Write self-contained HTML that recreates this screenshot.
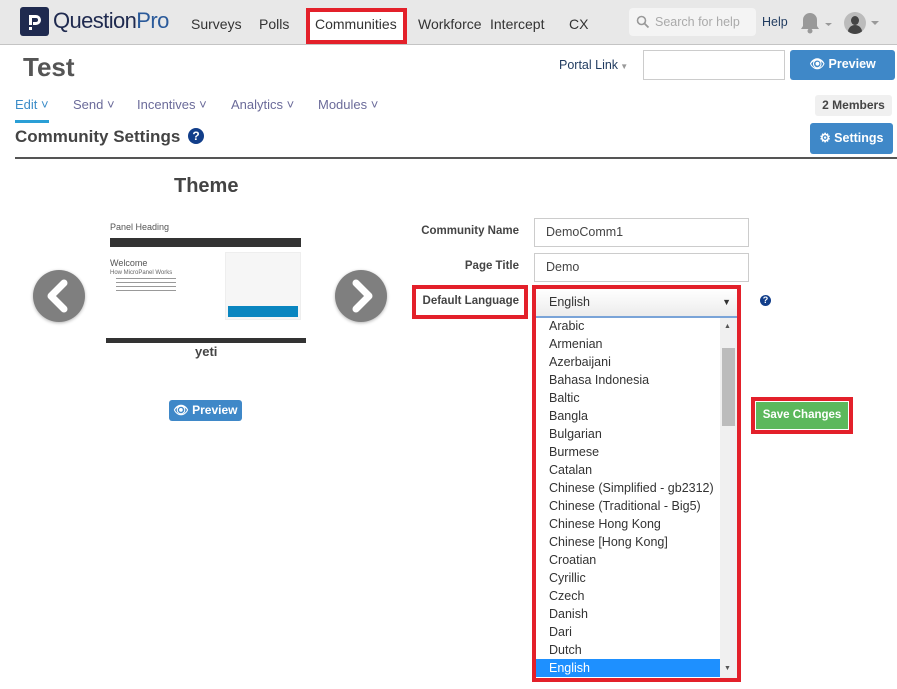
<!DOCTYPE html>
<html><head><meta charset="utf-8"><style>
*{box-sizing:border-box;margin:0;padding:0}
body{width:897px;height:689px;overflow:hidden;background:#fff;font-family:"Liberation Sans",sans-serif;position:relative;color:#333}
.a{position:absolute;white-space:nowrap}
.hdr{left:0;top:0;width:897px;height:45px;background:#e8e8e8;border-bottom:1px solid #c4c4c4}
.nav{font-size:14px;color:#333;top:16px}
.tab{font-size:13px;color:#6b6b9a;top:97px}
.btn{background:#3f88c8;color:#fff;border-radius:3px;font-weight:bold;font-size:12.5px;text-align:center}
.lbl{font-size:11.5px;font-weight:bold;color:#444;text-align:right;width:120px;left:399px}
.inp{border:1px solid #ccc;background:#fff;font-size:12.5px;color:#444;padding-left:11px;line-height:27px}
.opt{height:18px;line-height:18px;font-size:12.5px;color:#333;padding-left:13px}
.circ{width:52px;height:52px;border-radius:50%;background:#7f7f7f;box-shadow:0 1px 3px rgba(0,0,0,.3)}
</style></head><body>
<div class="a hdr"></div>
<div class="a" style="left:20px;top:7px;width:29px;height:29px;background:#1f2a4f;border-radius:3px"></div>
<svg class="a" style="left:20px;top:7px" width="29" height="29"><path d="M9 8h7a5 5 0 0 1 0 10h-3v-3h3a2 2 0 0 0 0-4h-4v7H9z" fill="#fff"/><rect x="9" y="20" width="3" height="3" fill="#fff"/></svg>
<div class="a" style="left:53px;top:8px;font-size:22px;color:#1f2a4f;letter-spacing:-0.6px">Question<span style="color:#2a5a9a">Pro</span></div>
<div class="a nav" style="left:191px">Surveys</div>
<div class="a nav" style="left:259px">Polls</div>
<div class="a" style="left:306px;top:8px;width:101px;height:36px;border:4px solid #e3202a;background:#fff"></div>
<div class="a nav" style="left:315px">Communities</div>
<div class="a nav" style="left:418px">Workforce</div>
<div class="a nav" style="left:490px">Intercept</div>
<div class="a nav" style="left:569px">CX</div>
<div class="a" style="left:629px;top:8px;width:127px;height:28px;background:#f4f4f4;border-radius:4px"></div>
<svg class="a" style="left:636px;top:15px" width="14" height="14"><circle cx="5.5" cy="5.5" r="4" stroke="#999" stroke-width="1.6" fill="none"/><path d="M8.5 8.5l4 4" stroke="#999" stroke-width="1.8"/></svg>
<div class="a" style="left:655px;top:15px;font-size:12.5px;color:#aaa">Search for help</div>
<div class="a" style="left:762px;top:15px;font-size:12.5px;color:#1f3a5f">Help</div>
<svg class="a" style="left:797px;top:10px" width="40" height="25"><path d="M4 19h18l-2-3v-6a7 7 0 0 0-14 0v6z" fill="#999"/><circle cx="13" cy="21" r="2.5" fill="#999"/><path d="M28 13h7l-3.5 3z" fill="#999"/></svg>
<div class="a" style="left:844px;top:12px;width:22px;height:22px;border-radius:50%;background:#bbb;overflow:hidden"><div style="position:absolute;left:7px;top:4px;width:8px;height:9px;border-radius:50%;background:#444"></div><div style="position:absolute;left:4px;top:13px;width:14px;height:12px;border-radius:7px 7px 0 0;background:#444"></div></div>
<svg class="a" style="left:870px;top:20px" width="10" height="6"><path d="M1 1h8l-4 4z" fill="#999"/></svg>

<div class="a" style="left:23px;top:52px;font-size:26px;font-weight:bold;color:#555">Test</div>
<div class="a" style="left:559px;top:58px;font-size:12.5px;color:#1f3a5f">Portal Link<span style="color:#999;font-size:8px"> ▼</span></div>
<div class="a" style="left:643px;top:50px;width:142px;height:30px;border:1px solid #ccc"></div>
<div class="a btn" style="left:790px;top:50px;width:105px;height:30px;line-height:28px">👁 Preview</div>

<div class="a tab" style="left:15px;color:#3c8dc8">Edit ˅</div>
<div class="a tab" style="left:73px">Send ˅</div>
<div class="a tab" style="left:137px">Incentives ˅</div>
<div class="a tab" style="left:231px">Analytics ˅</div>
<div class="a tab" style="left:318px">Modules ˅</div>
<div class="a" style="left:15px;top:120px;width:34px;height:3px;background:#2a9fd6"></div>
<div class="a" style="left:815px;top:95px;width:77px;height:21px;background:#f0f0f0;border-radius:3px;font-size:12px;font-weight:bold;color:#444;text-align:center;line-height:20px">2 Members</div>
<div class="a" style="left:15px;top:127px;font-size:17px;font-weight:bold;color:#444">Community Settings</div>
<div class="a" style="left:188px;top:128px;width:16px;height:16px;border-radius:50%;background:#123e8a;color:#fff;font-size:12px;font-weight:bold;text-align:center;line-height:16px">?</div>
<div class="a btn" style="left:810px;top:123px;width:83px;height:31px;line-height:30px">⚙ Settings</div>
<div class="a" style="left:15px;top:157px;width:882px;height:2px;background:#555"></div>

<div class="a" style="left:174px;top:175px;font-size:20px;font-weight:bold;color:#444">Theme</div>
<div class="a circ" style="left:33px;top:270px"></div>
<svg class="a" style="left:33px;top:270px" width="52" height="52"><path d="M31 13L18 26l13 13" stroke="#fff" stroke-width="7" fill="none" stroke-linecap="round" stroke-linejoin="round"/></svg>
<div class="a circ" style="left:335px;top:270px"></div>
<svg class="a" style="left:335px;top:270px" width="52" height="52"><path d="M21 13l13 13-13 13" stroke="#fff" stroke-width="7" fill="none" stroke-linecap="round" stroke-linejoin="round"/></svg>
<div class="a" style="left:106px;top:220px;width:200px;height:124px;background:#fff">
<div class="a" style="left:4px;top:2px;font-size:9px;color:#555">Panel Heading</div>
<div class="a" style="left:4px;top:18px;width:191px;height:9px;background:#333"></div>
<div class="a" style="left:4px;top:38px;font-size:9px;color:#555">Welcome</div>
<div class="a" style="left:4px;top:50px;font-size:6px;color:#666">How MicroPanel Works</div>
<div class="a" style="left:10px;top:58px;width:60px;height:14px;background:repeating-linear-gradient(#999 0 1px,#fff 1px 4px)"></div>
<div class="a" style="left:119px;top:32px;width:76px;height:68px;background:#f6f6f6;border:1px solid #eee"></div>
<div class="a" style="left:122px;top:86px;width:70px;height:11px;background:#0a86c0"></div>
<div class="a" style="left:0;top:118px;width:200px;height:5px;background:#333"></div>
</div>
<div class="a" style="left:195px;top:344px;font-size:13px;font-weight:bold;color:#444">yeti</div>
<div class="a btn" style="left:169px;top:400px;width:73px;height:21px;line-height:20px;font-size:12px">👁 Preview</div>

<div class="a lbl" style="top:225px">Community Name</div>
<div class="a lbl" style="top:260px">Page Title</div>
<div class="a" style="left:412px;top:285px;width:116px;height:34px;border:4px solid #e3202a"></div>
<div class="a lbl" style="top:295px">Default Language</div>
<div class="a inp" style="left:534px;top:218px;width:215px;height:29px">DemoComm1</div>
<div class="a inp" style="left:534px;top:253px;width:215px;height:29px">Demo</div>
<div class="a" style="left:532px;top:285px;width:209px;height:397px;border:4px solid #e3202a"></div>
<div class="a" style="left:536px;top:289px;width:201px;height:29px;background:linear-gradient(#fff,#ececec);border-bottom:2px solid #7aa4d8;font-size:12.5px;color:#333;padding-left:13px;line-height:26px">English<span style="position:absolute;right:6px;font-size:9px">▼</span></div>
<div class="a" style="left:536px;top:318px;width:201px;height:360px;overflow:hidden;background:#fff">
<div style="position:absolute;left:0;top:-1px;width:184px">
<div class="opt">Arabic</div><div class="opt">Armenian</div><div class="opt">Azerbaijani</div><div class="opt">Bahasa Indonesia</div><div class="opt">Baltic</div><div class="opt">Bangla</div><div class="opt">Bulgarian</div><div class="opt">Burmese</div><div class="opt">Catalan</div><div class="opt">Chinese (Simplified - gb2312)</div><div class="opt">Chinese (Traditional - Big5)</div><div class="opt">Chinese Hong Kong</div><div class="opt">Chinese [Hong Kong]</div><div class="opt">Croatian</div><div class="opt">Cyrillic</div><div class="opt">Czech</div><div class="opt">Danish</div><div class="opt">Dari</div><div class="opt">Dutch</div><div class="opt" style="background:#1e90ff;color:#fff">English</div>
</div>
<div style="position:absolute;left:184px;top:0;width:17px;height:360px;background:#f0f0f0"></div>
<div style="position:absolute;left:186px;top:30px;width:13px;height:78px;background:#bcbcbc"></div>
<div style="position:absolute;left:188px;top:5px;font-size:7px;color:#555">▲</div>
<div style="position:absolute;left:188px;top:347px;font-size:7px;color:#555">▼</div>
</div>
<div class="a" style="left:760px;top:295px;width:11px;height:11px;border-radius:50%;background:#123e8a;color:#fff;font-size:9px;font-weight:bold;text-align:center;line-height:11px">?</div>
<div class="a" style="left:751px;top:397px;width:102px;height:37px;border:4px solid #e3202a"></div>
<div class="a" style="left:756px;top:402px;width:92px;height:27px;background:#5cb85c;color:#fff;font-size:11.5px;font-weight:bold;text-align:center;line-height:26px">Save Changes</div>
</body></html>
